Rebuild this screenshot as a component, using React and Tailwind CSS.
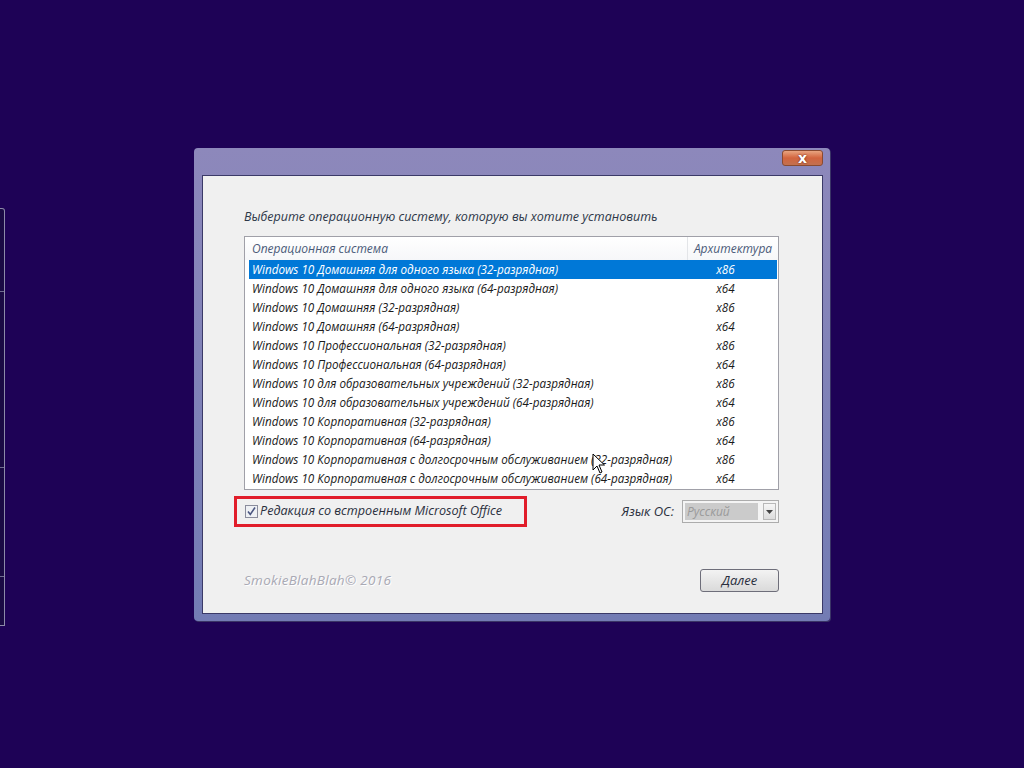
import React from 'react';

const editions = [
  ['Windows 10 Домашняя для одного языка (32-разрядная)', 'x86'],
  ['Windows 10 Домашняя для одного языка (64-разрядная)', 'x64'],
  ['Windows 10 Домашняя (32-разрядная)', 'x86'],
  ['Windows 10 Домашняя (64-разрядная)', 'x64'],
  ['Windows 10 Профессиональная (32-разрядная)', 'x86'],
  ['Windows 10 Профессиональная (64-разрядная)', 'x64'],
  ['Windows 10 для образовательных учреждений (32-разрядная)', 'x86'],
  ['Windows 10 для образовательных учреждений (64-разрядная)', 'x64'],
  ['Windows 10 Корпоративная (32-разрядная)', 'x86'],
  ['Windows 10 Корпоративная (64-разрядная)', 'x64'],
  ['Windows 10 Корпоративная с долгосрочным обслуживанием (32-разрядная)', 'x86'],
  ['Windows 10 Корпоративная с долгосрочным обслуживанием (64-разрядная)', 'x64'],
];

export default function App() {
  return (
    <div className="relative h-[768px] w-full overflow-hidden bg-[#1e0256] font-['Open_Sans',sans-serif] italic">
      {/* окно слева, видна только кромка */}
      <div className="absolute left-0 top-[208px] h-[418px] w-[5px] rounded-tr-[3px] border-r border-t border-b border-[#8c8aa8] bg-[#1a0a44]">
        <div className="mt-[82px] h-px w-full bg-[#6f6c90]" />
        <div className="mt-[175px] h-px w-full bg-[#6f6c90]" />
        <div className="mt-[108px] h-px w-full bg-[#6f6c90]" />
      </div>

      <div className="pl-[194px] pt-[148px]">
        {/* рамка окна */}
        <div className="w-[636px] rounded-[4px] bg-gradient-to-b from-[#8d88bb] to-[#737cb4] pb-[7px] pl-[8px] pr-[7px] shadow-[1px_1px_0_#3a3466]">
          <div className="flex h-[27px] justify-end pt-[2px]">
            <div className="flex h-[16px] w-[41px] items-center justify-center rounded-[3px] border border-[#8a4a30] bg-gradient-to-b from-[#e8a480] via-[#d2643e] to-[#c27050]">
              <span className="font-['DejaVu_Sans',sans-serif] text-[14px] font-bold not-italic leading-none text-white [text-shadow:0_0_2px_#5a1a08]">x</span>
            </div>
          </div>

          {/* клиентская область */}
          <div className="border border-[#3b3a68] bg-[#f0f0f0] pb-[21px] pl-[41px] pr-[43px] pt-[33px]">
            <div className="h-[16px] text-[12.5px] leading-[16px] text-[#2d3748]">
              Выберите операционную систему, которую вы хотите установить
            </div>

            {/* список */}
            <div className="mt-[11px] w-[535px] border border-[#a0a0a8] bg-white pb-px">
              <div className="flex h-[23px] items-center bg-gradient-to-b from-white to-[#f6f7f9] text-[12px] text-[#4a5a78]">
                <div className="w-[442px] pl-[7px]">Операционная система</div>
                <div className="flex h-full flex-1 items-center justify-center border-l border-[#e3e5e8]">Архитектура</div>
              </div>
              <div className="pl-[4px] pr-px">
                {editions.map(([name, arch], i) => (
                  <div
                    key={name}
                    className={`flex h-[19px] items-center text-[11.7px] ${
                      i === 0 ? 'bg-[#0078d7] text-white' : 'text-[#1a1a1a]'
                    }`}
                  >
                    <div className="w-[438px] pl-[3px] whitespace-nowrap">{name}</div>
                    <div className="flex-1 pr-[13px] text-center">{arch}</div>
                  </div>
                ))}
              </div>
            </div>

            {/* опции */}
            <div className="mt-[6px] flex w-[535px] items-center justify-between">
              <div className="-ml-[10px] flex h-[31px] w-[293px] items-center border-[3px] border-[#e11d2a] pl-[8px]">
                <div className="flex h-[13px] w-[13px] items-center justify-center border border-[#8a8c9c] bg-[#eef0f4]">
                  <svg width="11" height="11" viewBox="0 0 11 11">
                    <path d="M2 5.5 L4.3 8.5 L9 1.5" fill="none" stroke="#4b5680" strokeWidth="1.6" />
                  </svg>
                </div>
                <span className="ml-[2px] text-[12.6px] text-[#2a2f3d]">Редакция со встроенным Microsoft Office</span>
              </div>
              <div className="flex items-center">
                <span className="text-[13px] text-[#2a2f3d]">Язык ОС:</span>
                <div className="ml-[8px] flex h-[23px] w-[97px] items-center border border-[#acacac] bg-[#f4f4f4] p-[2px]">
                  <div className="flex h-full w-[74px] items-center bg-[#cbcbcb] pl-[2px] text-[12px] text-[#9a9a9a]">Русский</div>
                  <div className="ml-[5px] flex h-full w-[13px] items-center justify-center border border-[#b8b8b8] bg-gradient-to-b from-[#f6f6f6] to-[#dcdcdc]">
                    <svg width="7" height="4" viewBox="0 0 7 4">
                      <path d="M0 0 H7 L3.5 4 Z" fill="#444" />
                    </svg>
                  </div>
                </div>
              </div>
            </div>

            {/* низ */}
            <div className="mt-[42px] flex w-[535px] items-center justify-between">
              <span className="text-[13.5px] tracking-[0.3px] text-[#a9a9b4] [text-shadow:1px_1px_0_#ffffff]">SmokieBlahBlah© 2016</span>
              <button className="h-[23px] w-[79px] rounded-[3px] border border-[#6e6e7a] bg-gradient-to-b from-[#f3f3f3] to-[#dadada] text-[13px] italic text-[#2a2f3d]">
                Далее
              </button>
            </div>
          </div>
        </div>
      </div>

      {/* курсор */}
      <svg className="absolute left-[592px] top-[453px]" width="14" height="22" viewBox="0 0 14 22">
        <path d="M1 1 L1 17 L5 13 L8 20 L10 19 L7 12 L12.5 12 Z" fill="#fff" stroke="#000" strokeWidth="1" strokeLinejoin="round" />
      </svg>
    </div>
  );
}
